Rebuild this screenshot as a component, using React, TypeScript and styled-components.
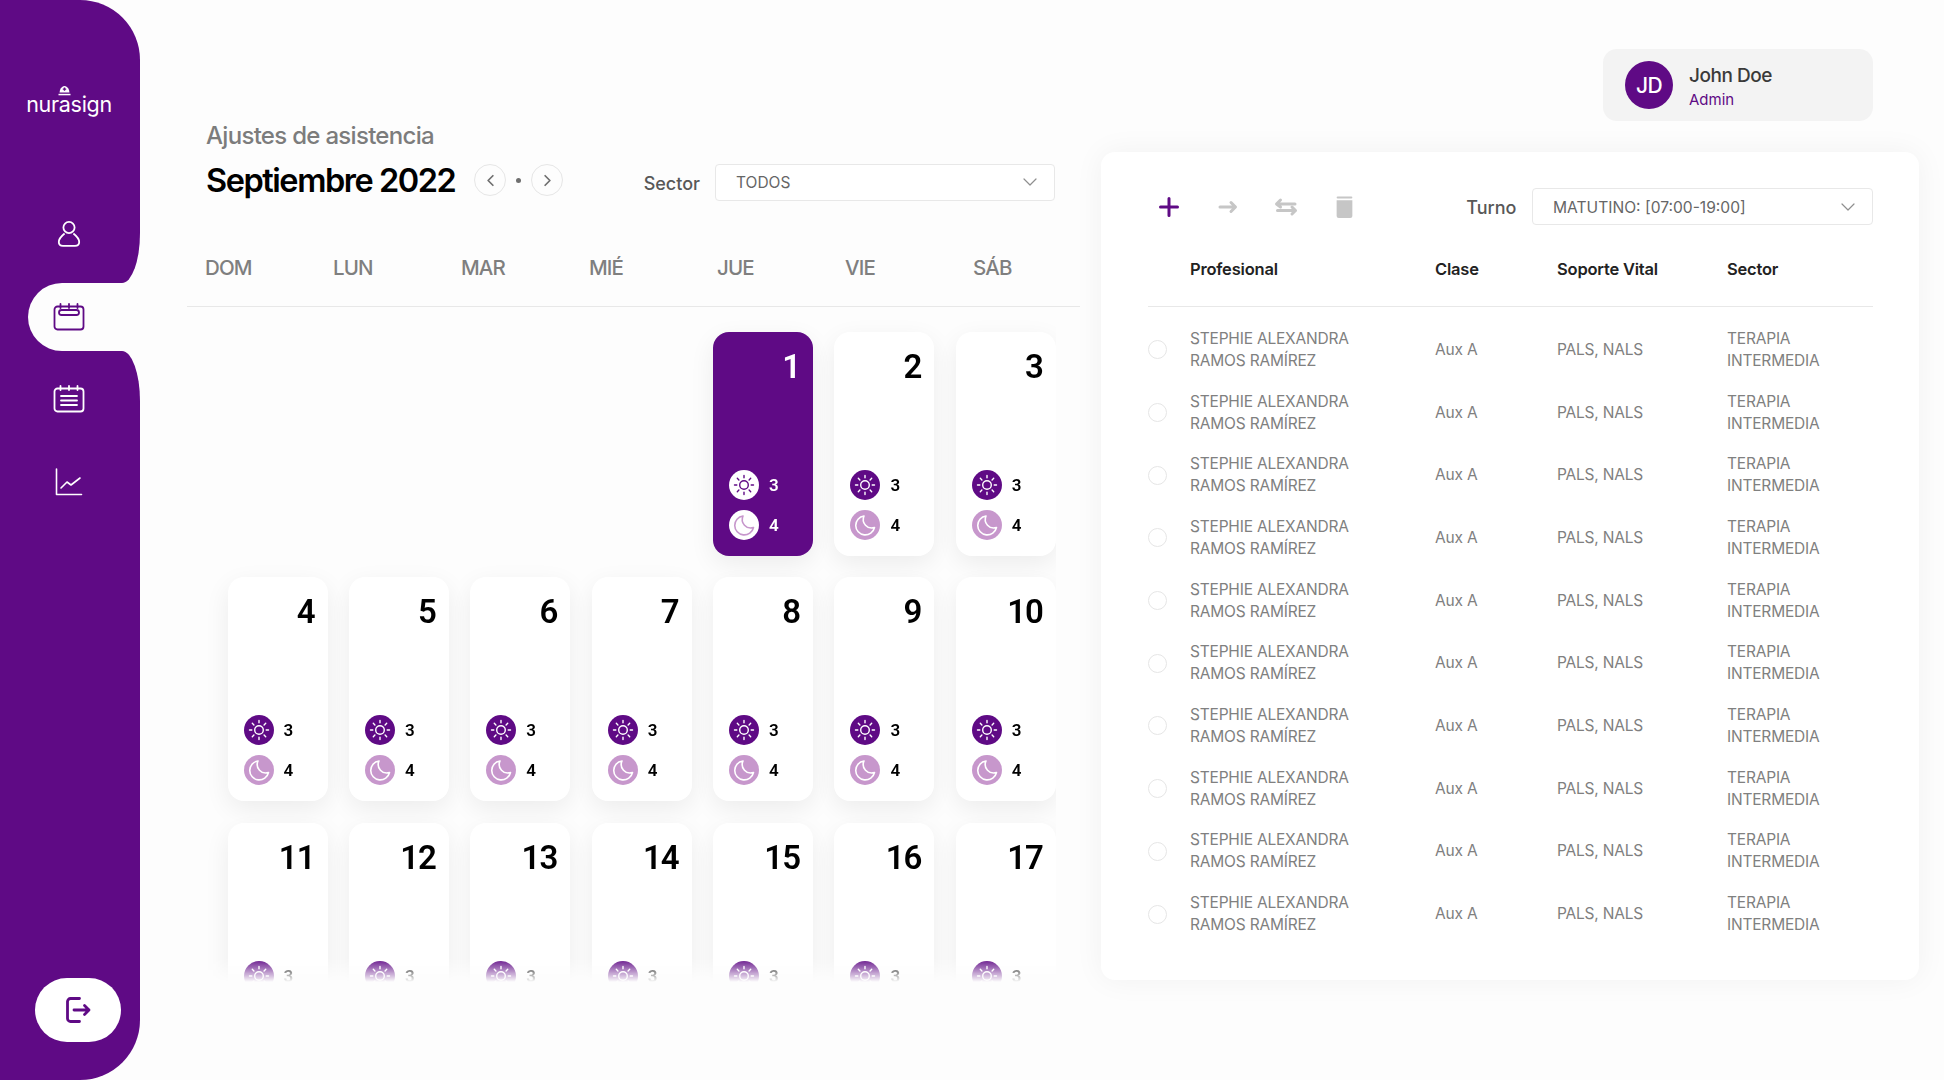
import React from 'react';
import styled, { createGlobalStyle } from 'styled-components';
import { ChevronDown, ChevronLeft, ChevronRight } from 'lucide-react';

const PURPLE = '#5f0a85';
const LILAC = '#c797cc';
const BG = '#fdfdfd';

const GlobalStyle = createGlobalStyle`
  html, body {
    margin: 0;
    padding: 0;
    background: ${BG};
  }
  * {
    box-sizing: border-box;
  }
  body {
    font-family: Inter, 'Liberation Sans', sans-serif;
  }
`;

const WEEKDAYS = ['DOM', 'LUN', 'MAR', 'MIÉ', 'JUE', 'VIE', 'SÁB'];
const DAYS = Array.from({ length: 17 }, (_, i) => i + 1);
const ROWS = Array.from({ length: 10 }, (_, i) => i);

const UserIcon = () => (
  <svg width="24" height="28" viewBox="0 0 24 28" fill="none" stroke="#fff" strokeWidth="1.8">
    <circle cx="12" cy="7.5" r="5.6" />
    <path d="M7.6 13.5C4.5 16 1.8 19 1.8 22c0 2.6 2 3.8 4.2 3.8h12c2.2 0 4.2-1.2 4.2-3.8 0-3-2.7-6-5.8-8.5" />
  </svg>
);

const CalendarIcon = () => (
  <svg width="32" height="28" viewBox="0 0 32 28" fill="none" stroke={PURPLE} strokeWidth="1.8" strokeLinecap="round">
    <rect x="1.5" y="3.5" width="29" height="23" rx="3" />
    <rect x="6" y="7" width="20" height="5" rx="2.5" />
    <path d="M7.5 1v4M16 1v4M24.5 1v4" />
  </svg>
);

const ListIcon = () => (
  <svg width="32" height="28" viewBox="0 0 32 28" fill="none" stroke="#fff" strokeWidth="1.8" strokeLinecap="round">
    <rect x="1.5" y="3.5" width="29" height="23" rx="3" />
    <path d="M7.5 1v4M16 1v4M24.5 1v4M8 11h16M8 15.5h16M8 20h16" />
  </svg>
);

const ChartIcon = () => (
  <svg width="28" height="28" viewBox="0 0 28 28" fill="none" stroke="#fff" strokeWidth="1.6" strokeLinecap="round" strokeLinejoin="round">
    <path d="M1.5 1v25.5h25" />
    <path d="M6 20l6-6 4 3 9-7" />
  </svg>
);

const LogoutIcon = () => (
  <svg width="28" height="28" viewBox="0 0 28 28" fill="none" stroke={PURPLE} strokeWidth="2.8" strokeLinecap="round" strokeLinejoin="round">
    <path d="M15.5 2.5H6.5a3 3 0 0 0-3 3v17a3 3 0 0 0 3 3h9" />
    <path d="M10 14h15M20.5 9.5L25 14l-4.500 4.500" />
  </svg>
);

const SunIcon = ({ color }: { color: string }) => (
  <svg width="22" height="22" viewBox="0 0 22 22" fill="none" stroke={color} strokeWidth="1.4" strokeLinecap="round">
    <circle cx="11" cy="11" r="4.300" />
    <path d="M11 1.500v2.300M11 18.200v2.300M1.500 11h2.300M18.200 11h2.300M4.300 4.300l1.600 1.600M16.100 16.100l1.600 1.600M4.300 17.700l1.600-1.600M16.100 5.900l1.600-1.600" />
  </svg>
);

const MoonIcon = ({ color }: { color: string }) => (
  <svg width="30" height="30" viewBox="0 0 30 30" fill="none" stroke={color} strokeWidth="1.6" strokeLinejoin="round">
    <path d="M14 6A9.500 9.500 0 1 0 24.500 17.500 A8.500 8.500 0 0 1 14 6Z" />
  </svg>
);

const PlusIcon = () => (
  <svg width="20" height="20" viewBox="0 0 20 20" fill="none" stroke={PURPLE} strokeWidth="3" strokeLinecap="round">
    <path d="M10 1.500v17M1.500 10h17" />
  </svg>
);

const ArrowIcon = () => (
  <svg width="20" height="20" viewBox="0 0 20 20" fill="none" stroke="#c6c6c6" strokeWidth="3" strokeLinecap="round" strokeLinejoin="round">
    <path d="M2 10h15M13 5.500l4.500 4.500-4.500 4.500" />
  </svg>
);

const SwapIcon = () => (
  <svg width="24" height="20" viewBox="0 0 24 20" fill="none" stroke="#c6c6c6" strokeWidth="3" strokeLinecap="round" strokeLinejoin="round">
    <path d="M21 7H3M6.500 3L2.500 7l4 3" />
    <path d="M3.500 13.500h18M18 10l3.500 3.500-3.500 3.500" />
  </svg>
);

const TrashIcon = () => (
  <svg width="19" height="22" viewBox="0 0 18 21" fill="#c6c6c6">
    <rect x="1.500" y="0.500" width="15" height="2" rx="1" />
    <path d="M1.500 4h15v15a2 2 0 0 1-2 2h-11a2 2 0 0 1-2-2z" />
  </svg>
);

const NurseCap = () => (
  <svg width="13" height="10" viewBox="0 0 13 10" fill="#fff">
    <path d="M2 4C3 1.200 5 0 6.500 0S10 1.200 11 4l.5 2.500h-10z" />
    <rect x="0.500" y="7.800" width="12" height="1.500" />
    <path d="M5.800 1.500h1.400v1h1v1.300h-1v1H5.800v-1h-1V2.500h1z" fill={PURPLE} />
  </svg>
);

const Shift = ({ active, count }: { active: boolean; count: number }) => (
  <ShiftList>
    <ShiftRow>
      <SunBadge $active={active}>
        <SunIcon color={active ? PURPLE : '#fff'} />
      </SunBadge>
      <ShiftCount $active={active}>{count}</ShiftCount>
    </ShiftRow>
    <ShiftRow>
      <MoonBadge $active={active}>
        <MoonIcon color={active ? LILAC : '#fff'} />
      </MoonBadge>
      <ShiftCount $active={active}>{count + 1}</ShiftCount>
    </ShiftRow>
  </ShiftList>
);

const App = () => {
  return (
    <Page>
      <GlobalStyle />
      <Sidebar>
        <SideTop>
          <Logo>
            nur
            <LogoA>
              a
              <LogoCap>
                <NurseCap />
              </LogoCap>
            </LogoA>
            sign
          </Logo>
          <NavItem>
            <UserIcon />
          </NavItem>
        </SideTop>
        <ActiveRow>
          <ActivePill>
            <CalendarIcon />
          </ActivePill>
        </ActiveRow>
        <SideBottom>
          <NavItem>
            <ListIcon />
          </NavItem>
          <NavItem>
            <ChartIcon />
          </NavItem>
          <LogoutButton>
            <LogoutIcon />
          </LogoutButton>
        </SideBottom>
      </Sidebar>

      <CalendarColumn>
        <Heading>Ajustes de asistencia</Heading>
        <MonthRow>
          <MonthTitle>Septiembre 2022</MonthTitle>
          <MonthNav>
            <RoundButton>
              <ChevronLeft size={19} strokeWidth={2.2} />
            </RoundButton>
            <NavDot />
            <RoundButton>
              <ChevronRight size={19} strokeWidth={2.2} />
            </RoundButton>
          </MonthNav>
          <SectorLabel>Sector</SectorLabel>
          <SectorSelect>
            <SelectText>TODOS</SelectText>
            <ChevronDown size={24} strokeWidth={1.2} color="#8f8f8f" />
          </SectorSelect>
        </MonthRow>
        <WeekHeader>
          {WEEKDAYS.map((day) => (
            <WeekDay key={day}>{day}</WeekDay>
          ))}
        </WeekHeader>
        <DaysViewport>
          <DaysGrid>
            <DayCard $start={5} $active>
              <DayNumber $active>1</DayNumber>
              <Shift active count={3} />
            </DayCard>
            {DAYS.slice(1).map((day) => (
              <DayCard key={day}>
                <DayNumber>{day}</DayNumber>
                <Shift active={false} count={3} />
              </DayCard>
            ))}
          </DaysGrid>
        </DaysViewport>
      </CalendarColumn>

      <RightColumn>
        <UserCard>
          <Avatar>JD</Avatar>
          <UserInfo>
            <UserName>John Doe</UserName>
            <UserRole>Admin</UserRole>
          </UserInfo>
        </UserCard>
        <Panel>
          <Toolbar>
            <ToolButton>
              <PlusIcon />
            </ToolButton>
            <ToolButton>
              <ArrowIcon />
            </ToolButton>
            <ToolButton>
              <SwapIcon />
            </ToolButton>
            <ToolButton>
              <TrashIcon />
            </ToolButton>
            <ShiftLabel>Turno</ShiftLabel>
            <ShiftSelect>
              <SelectText>MATUTINO: [07:00-19:00]</SelectText>
              <ChevronDown size={24} strokeWidth={1.2} color="#8f8f8f" />
            </ShiftSelect>
          </Toolbar>
          <TableHead>
            <span />
            <HeadCell>Profesional</HeadCell>
            <HeadCell>Clase</HeadCell>
            <HeadCell>Soporte Vital</HeadCell>
            <HeadCell>Sector</HeadCell>
          </TableHead>
          <TableBody>
            {ROWS.map((row) => (
              <TableRow key={row}>
                <Radio />
                <Cell>
                  STEPHIE ALEXANDRA
                  <br />
                  RAMOS RAMÍREZ
                </Cell>
                <Cell>Aux A</Cell>
                <Cell>PALS, NALS</Cell>
                <Cell>
                  TERAPIA
                  <br />
                  INTERMEDIA
                </Cell>
              </TableRow>
            ))}
          </TableBody>
        </Panel>
      </RightColumn>
    </Page>
  );
};

export default App;

const Page = styled.div`
  display: flex;
  width: 1944px;
  height: 1080px;
  overflow: hidden;
  background: ${BG};
`;

const Sidebar = styled.nav`
  display: flex;
  flex-direction: column;
  flex: none;
  width: 140px;
  height: 1080px;
`;

const SideTop = styled.div`
  display: flex;
  flex-direction: column;
  align-items: center;
  height: 283px;
  padding-top: 90px;
  padding-right: 2px;
  background: ${PURPLE};
  border-radius: 0 60px 18px 0 / 0 60px 50px 0;
`;

const Logo = styled.div`
  display: flex;
  margin-bottom: 102px;
  color: #fff;
  font-size: 21.5px;
  font-weight: 400;
  line-height: 28px;
  letter-spacing: -0.3px;
`;

const LogoA = styled.span`
  position: relative;
`;

const LogoCap = styled.span`
  position: absolute;
  top: -4px;
  left: -0.5px;
  display: flex;
`;

const NavItem = styled.div`
  display: flex;
  align-items: center;
  justify-content: center;
  width: 32px;
  height: 28px;
`;

const ActiveRow = styled.div`
  height: 68px;
  padding-left: 28px;
  background: linear-gradient(to right, ${PURPLE} 62px, transparent 62px);
`;

const ActivePill = styled.div`
  display: flex;
  align-items: center;
  justify-content: flex-start;
  height: 68px;
  padding-left: 25px;
  background: ${BG};
  border-radius: 34px 0 0 34px;
`;

const SideBottom = styled.div`
  display: flex;
  flex-direction: column;
  align-items: center;
  gap: 55px;
  flex: 1;
  padding-top: 34px;
  padding-right: 2px;
  padding-bottom: 38px;
  background: ${PURPLE};
  border-radius: 0 18px 60px 0 / 0 50px 60px 0;
`;

const LogoutButton = styled.button`
  display: flex;
  align-items: center;
  justify-content: center;
  align-self: flex-start;
  width: 86px;
  height: 64px;
  margin-top: auto;
  margin-left: 35px;
  padding: 0;
  border: none;
  border-radius: 32px;
  background: #fff;
  cursor: pointer;
`;

const CalendarColumn = styled.main`
  flex: none;
  width: 893px;
  margin-left: 47px;
  padding-top: 120px;
`;

const Heading = styled.h2`
  margin: 1px 0 13px 19px;
  color: #7c7c7c;
  font-size: 24px;
  font-weight: 500;
  line-height: 30px;
  letter-spacing: -0.7px;
`;

const MonthRow = styled.div`
  display: flex;
  align-items: center;
  width: 868px;
  height: 36px;
  padding-left: 19px;
`;

const MonthTitle = styled.h1`
  margin: -2px 0 0;
  color: #000;
  font-size: 32.5px;
  font-weight: 600;
  line-height: 40px;
  letter-spacing: -1.45px;
`;

const MonthNav = styled.div`
  display: flex;
  align-items: center;
  gap: 10px;
  margin-left: 19px;
  margin-top: -4px;
`;

const RoundButton = styled.button`
  display: flex;
  align-items: center;
  justify-content: center;
  width: 32px;
  height: 32px;
  padding: 0;
  border: 1.5px solid #e6e6e6;
  border-radius: 50%;
  background: transparent;
  color: #6f6f6f;
`;

const NavDot = styled.span`
  width: 5px;
  height: 5px;
  border-radius: 50%;
  background: #6f6f6f;
`;

const SectorLabel = styled.span`
  margin-left: auto;
  margin-right: 15px;
  padding-top: 2px;
  color: #585858;
  font-size: 18px;
  font-weight: 500;
`;

const SectorSelect = styled.div`
  display: flex;
  align-items: center;
  justify-content: space-between;
  width: 340px;
  height: 37px;
  padding: 0 12px 0 20px;
  border: 1.5px solid #e8e8e8;
  border-radius: 4px;
  background: #fff;
  color: #666;
  font-size: 15.5px;
`;

const SelectText = styled.span`
  padding-top: 1px;
`;

const WeekHeader = styled.div`
  display: grid;
  grid-template-columns: repeat(7, 128px);
  align-items: center;
  height: 107px;
  padding-left: 18px;
  padding-top: 29px;
  border-bottom: 1.5px solid #e8e8e8;
`;

const WeekDay = styled.span`
  color: #7f7f7f;
  font-size: 20.5px;
  font-weight: 500;
  letter-spacing: -0.85px;
`;

const DaysViewport = styled.div`
  width: 869px;
  height: 675px;
  padding: 25px 0 0 40.5px;
  overflow: hidden;
  -webkit-mask-image: linear-gradient(to bottom, #000 calc(100% - 24px), transparent);
  mask-image: linear-gradient(to bottom, #000 calc(100% - 24px), transparent);
`;

const DaysGrid = styled.div`
  display: grid;
  grid-template-columns: repeat(7, 100px);
  grid-auto-rows: 224px;
  gap: 21.4px;
`;

const DayCard = styled.div<{ $start?: number; $active?: boolean }>`
  display: flex;
  flex-direction: column;
  justify-content: space-between;
  grid-column-start: ${(p) => p.$start ?? 'auto'};
  padding: 16px 13px 16px 16px;
  border-radius: 16px;
  background: ${(p) => (p.$active ? PURPLE : '#fff')};
  box-shadow: 0 8px 26px rgba(0, 0, 0, 0.07);
`;

const DayNumber = styled.div<{ $active?: boolean }>`
  color: ${(p) => (p.$active ? '#fff' : '#000')};
  font-family: Roboto, sans-serif;
  font-size: 33px;
  font-weight: 600;
  line-height: 38px;
  letter-spacing: -1px;
  text-align: right;
`;

const ShiftList = styled.div`
  display: flex;
  flex-direction: column;
  gap: 10px;
`;

const ShiftRow = styled.div`
  display: flex;
  align-items: center;
  gap: 10px;
`;

const SunBadge = styled.span<{ $active: boolean }>`
  display: flex;
  align-items: center;
  justify-content: center;
  width: 30px;
  height: 30px;
  border-radius: 50%;
  background: ${(p) => (p.$active ? '#fff' : PURPLE)};
`;

const MoonBadge = styled.span<{ $active: boolean }>`
  display: flex;
  width: 30px;
  height: 30px;
  border-radius: 50%;
  background: ${(p) => (p.$active ? '#fff' : LILAC)};
`;

const ShiftCount = styled.span<{ $active: boolean }>`
  color: ${(p) => (p.$active ? '#fff' : '#000')};
  font-family: Roboto, sans-serif;
  font-size: 17px;
  font-weight: 600;
`;

const RightColumn = styled.aside`
  display: flex;
  flex-direction: column;
  flex: none;
  width: 818px;
  margin-left: 21px;
  padding-top: 49px;
`;

const UserCard = styled.div`
  display: flex;
  align-items: center;
  gap: 16px;
  align-self: flex-end;
  width: 270px;
  height: 72px;
  margin-right: 46px;
  padding-left: 22px;
  border-radius: 14px;
  background: #f3f3f3;
`;

const Avatar = styled.div`
  display: flex;
  align-items: center;
  justify-content: center;
  width: 48px;
  height: 48px;
  border-radius: 50%;
  background: ${PURPLE};
  color: #fff;
  font-size: 21px;
  font-weight: 500;
  letter-spacing: -0.5px;
`;

const UserInfo = styled.div`
  display: flex;
  flex-direction: column;
  gap: 1px;
  padding-top: 2px;
`;

const UserName = styled.span`
  color: #3a3a3a;
  font-size: 19px;
  font-weight: 500;
  line-height: 26px;
  letter-spacing: -0.45px;
`;

const UserRole = styled.span`
  color: ${PURPLE};
  font-size: 15px;
  line-height: 20px;
`;

const Panel = styled.section`
  height: 828px;
  margin-top: 31px;
  padding: 36px 46px 0 47px;
  border-radius: 14px;
  background: #fff;
  box-shadow: 0 0 30px rgba(0, 0, 0, 0.05);
`;

const Toolbar = styled.div`
  display: flex;
  align-items: center;
  gap: 34.500px;
  height: 37px;
  padding-left: 9px;
`;

const ToolButton = styled.span`
  display: flex;
  align-items: center;
  justify-content: center;
  width: 24px;
  height: 24px;
`;

const ShiftLabel = styled.span`
  margin-left: auto;
  margin-right: -19px;
  padding-top: 2px;
  color: #585858;
  font-size: 18px;
  font-weight: 500;
`;

const ShiftSelect = styled.div`
  display: flex;
  align-items: center;
  justify-content: space-between;
  width: 341px;
  height: 37px;
  padding: 0 12px 0 20px;
  border: 1.5px solid #e8e8e8;
  border-radius: 4px;
  background: #fff;
  color: #666;
  font-size: 15.6px;
`;

const TableHead = styled.div`
  display: grid;
  grid-template-columns: 42px 245px 122px 170px 1fr;
  align-items: center;
  height: 82px;
  padding-top: 7px;
  border-bottom: 1.5px solid #e8e8e8;
`;

const HeadCell = styled.span`
  color: #222;
  font-size: 16.5px;
  font-weight: 600;
  letter-spacing: -0.2px;
`;

const TableBody = styled.div`
  padding-top: 11.5px;
`;

const TableRow = styled.div`
  display: grid;
  grid-template-columns: 42px 245px 122px 170px 1fr;
  align-items: center;
  height: 62.7px;
`;

const Radio = styled.span`
  width: 19px;
  height: 19px;
  border: 1.5px solid #e6e6e6;
  border-radius: 50%;
`;

const Cell = styled.span`
  color: #808080;
  font-size: 15.500px;
  line-height: 22px;
  letter-spacing: -0.2px;
`;
